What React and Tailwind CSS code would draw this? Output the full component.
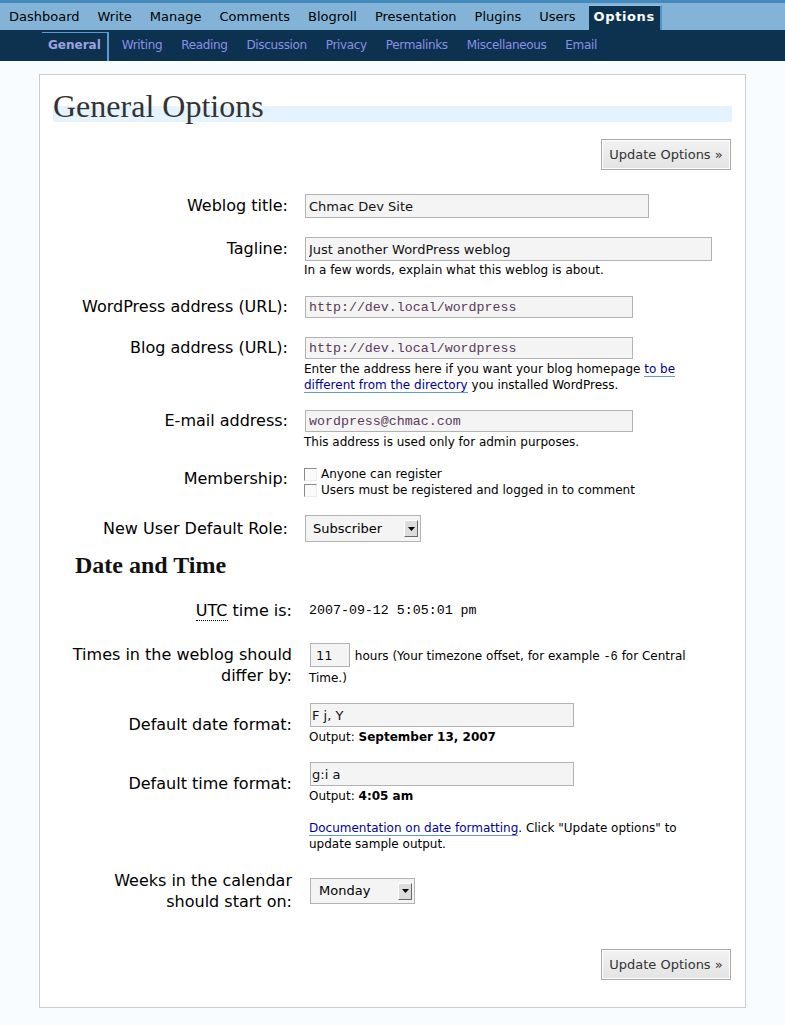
import React from 'react';

const MENU = ['Dashboard', 'Write', 'Manage', 'Comments', 'Blogroll', 'Presentation', 'Plugins', 'Users'];
const SUBMENU = ['Writing', 'Reading', 'Discussion', 'Privacy', 'Permalinks', 'Miscellaneous', 'Email'];

const TextInput = ({ value, className = '' }) => (
    <input
        readOnly
        value={value}
        className={`ml-px block h-[24px] border border-[#b2b2b2] bg-[#f4f4f4] text-[13px] text-[#111] outline-none ${className}`}
    />
);

const CodeInput = ({ value }) => (
    <input
        readOnly
        value={value}
        className="ml-px block h-[22px] w-[328px] border border-[#b2b2b2] bg-[#f4f4f4] px-[3px] font-['Liberation_Mono',monospace] text-[13.3px] text-[#5b3a5b] outline-none"
    />
);

const Checkbox = ({ label }) => (
    <label className="flex h-[16px] items-center">
        <input
            type="checkbox"
            className="mr-[4px] h-[13px] w-[13px] appearance-none border border-t-[#8a8a8a] border-l-[#8a8a8a] border-r-[#ececec] border-b-[#ececec] bg-[#fafafa]"
        />
        {label}
    </label>
);

const Select = ({ value, className = '' }) => (
    <div className={`ml-px flex items-center justify-between border border-[#b2b2b2] bg-[#f4f4f4] pr-[2px] text-[13px] ${className}`}>
        <span>{value}</span>
        <span className="flex h-[17px] w-[14px] items-center justify-center border border-t-white border-l-white border-r-[#666] border-b-[#666] bg-[#dcdcdc]">
            <svg width="7" height="4" viewBox="0 0 7 4">
                <path d="M0 0h7L3.5 4z" fill="#000" />
            </svg>
        </span>
    </div>
);

const Link = ({ children }) => (
    <a href="#" className="border-b border-[#6699cc] text-[#00019b]">
        {children}
    </a>
);

const UpdateButton = ({ className = '' }) => (
    <div className={`flex justify-end pr-px ${className}`}>
        <button
            type="button"
            className="h-[31px] w-[130px] border border-[#a9a9a9] bg-[linear-gradient(#f2f2f2,#e3e3e3)] text-[13px] text-[#333] shadow-[inset_0_0_0_1px_#fff]"
        >
            Update Options »
        </button>
    </div>
);

// general settings: labels line up with the top of the field
const Field = ({ label, lh, className = '', children }) => (
    <div className={`flex items-start ${className}`}>
        <div className={`w-[235px] shrink-0 text-right text-[16px] ${lh}`}>{label}</div>
        <div className="min-w-0 flex-1 pl-[16px] pr-[20px] text-[12px] leading-[16px]">{children}</div>
    </div>
);

// date and time: labels centred against the field
const DateField = ({ label, className = '', children }) => (
    <div className={`flex items-center ${className}`}>
        <div className="w-[239px] shrink-0 text-right text-[16px] leading-[21px]">{label}</div>
        <div className="min-w-0 flex-1 pl-[17px] pr-[20px] text-[12px] leading-[16px]">{children}</div>
    </div>
);

export default function App() {
    return (
        <div className="min-h-screen bg-[#f9fcfe] pb-[17px] font-['DejaVu_Sans',sans-serif] text-black">
            {/* Admin menu */}
            <div className="flex h-[30px] items-end border-t-[3px] border-[#448abd] bg-[#83b4d8] pl-[4px] text-[13px]">
                {MENU.map((item) => (
                    <a key={item} href="#" className="mr-[8px] h-[25px] px-[5px] pt-[4px] leading-[16px] text-black">
                        {item}
                    </a>
                ))}
                <a href="#" className="h-[25px] border-t border-r-2 border-t-[#96c0de] border-r-[#4f96c8] bg-[#0d324f] px-[5px] pt-[3px] font-bold leading-[16px] tracking-[0.6px] text-white">
                    Options
                </a>
            </div>

            {/* Sub menu */}
            <div className="flex h-[31px] items-start bg-[#0d324f] pl-[42px] pt-[2px] text-[12px]">
                <a href="#" className="mr-[7px] h-[29px] border-t border-r-2 border-[#5d9ad4] px-[6px] pt-[4px] font-bold leading-[16px] text-[#9ea2e0]">
                    General
                </a>
                {SUBMENU.map((item) => (
                    <a key={item} href="#" className="mr-[7px] h-[29px] border-t border-transparent px-[6px] pt-[4px] leading-[16px] tracking-[-0.35px] text-[#8c8fe6]">
                        {item}
                    </a>
                ))}
            </div>

            {/* Panel */}
            <div className="mx-[39px] mt-[13px] border border-[#ccc] bg-white px-[13px] pb-[27px] pt-[14px]">
                <h2 className="h-[34px] bg-[linear-gradient(to_bottom,transparent_17px,#e5f3ff_17px,#e5f3ff_33px,transparent_33px)] font-['Liberation_Serif',serif] text-[32px] leading-[34px] text-[#333]">
                    General Options
                </h2>

                <UpdateButton className="mt-[16px]" />

                <Field label="Weblog title:" lh="leading-[24px]" className="mt-[24px]">
                    <TextInput value="Chmac Dev Site" className="w-[344px] px-[3px]" />
                </Field>

                <Field label="Tagline:" lh="leading-[24px]" className="mt-[19px]">
                    <TextInput value="Just another WordPress weblog" className="w-[407px] px-[3px]" />
                    <p className="mt-px">In a few words, explain what this weblog is about.</p>
                </Field>

                <Field label="WordPress address (URL):" lh="leading-[22px]" className="mt-[18px]">
                    <CodeInput value="http://dev.local/wordpress" />
                </Field>

                <Field label="Blog address (URL):" lh="leading-[22px]" className="mt-[19px]">
                    <CodeInput value="http://dev.local/wordpress" />
                    <p className="mt-[2px]">
                        Enter the address here if you want your blog homepage <Link>to be different from the directory</Link> you installed WordPress.
                    </p>
                </Field>

                <Field label="E-mail address:" lh="leading-[22px]" className="mt-[17px]">
                    <CodeInput value="wordpress@chmac.com" />
                    <p className="mt-[2px]">This address is used only for admin purposes.</p>
                </Field>

                <Field label="Membership:" lh="leading-[26px]" className="mt-[16px]">
                    <Checkbox label="Anyone can register" />
                    <Checkbox label="Users must be registered and logged in to comment" />
                </Field>

                <Field label="New User Default Role:" lh="leading-[27px]" className="mt-[17px]">
                    <Select value="Subscriber" className="h-[27px] w-[116px] pl-[7px]" />
                </Field>

                <h3 className="ml-[22px] mt-[10px] font-['Liberation_Serif',serif] text-[24px] font-bold leading-[26px] text-[#111]">
                    Date and Time
                </h3>

                <DateField
                    className="mt-[22px]"
                    label={
                        <>
                            <abbr title="Coordinated Universal Time" className="border-b border-dotted border-black no-underline">UTC</abbr> time is:
                        </>
                    }
                >
                    <span className="font-['Liberation_Mono',monospace] text-[13.3px] leading-[21px]">2007-09-12 5:05:01 pm</span>
                </DateField>

                <DateField
                    className="mt-[22px]"
                    label={
                        <>
                            Times in the weblog should
                            <br />
                            differ by:
                        </>
                    }
                >
                    <p>
                        <input
                            readOnly
                            value="11"
                            className="mb-[3px] ml-px mr-px inline-block h-[24px] w-[40px] border border-[#b2b2b2] bg-[#f4f4f4] px-[5px] text-[13px] text-[#111] outline-none"
                        />{' '}
                        hours (Your timezone offset, for example <code className="font-['Liberation_Mono',monospace] text-[12px]">-6</code> for Central Time.)
                    </p>
                </DateField>

                <DateField label="Default date format:" className="mt-[17px]">
                    <TextInput value="F j, Y" className="w-[264px] px-px" />
                    <p className="mt-[2px]">
                        Output: <strong className="font-bold">September 13, 2007</strong>
                    </p>
                </DateField>

                <DateField label="Default time format:" className="mt-[17px]">
                    <TextInput value="g:i a" className="w-[264px] px-px" />
                    <p className="mt-[2px]">
                        Output: <strong className="font-bold">4:05 am</strong>
                    </p>
                </DateField>

                <DateField label="" className="mt-[16px]">
                    <p>
                        <Link>Documentation on date formatting</Link>. Click "Update options" to update sample output.
                    </p>
                </DateField>

                <DateField
                    className="mt-[18px]"
                    label={
                        <>
                            Weeks in the calendar
                            <br />
                            should start on:
                        </>
                    }
                >
                    <Select value="Monday" className="h-[26px] w-[105px] pl-[8px]" />
                </DateField>

                <UpdateButton className="mt-[37px]" />
            </div>
        </div>
    );
}
